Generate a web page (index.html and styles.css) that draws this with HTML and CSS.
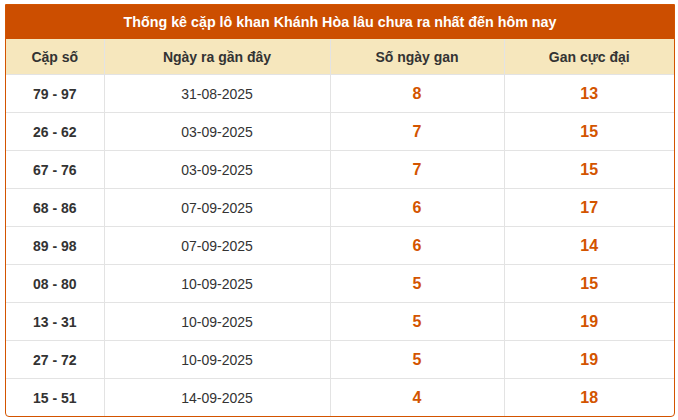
FILE: index.html
```html
<!DOCTYPE html>
<html lang="vi">
<head>
<meta charset="utf-8">
<link rel="stylesheet" href="styles.css">
</head>
<body>
<div class="box">
  <div class="title">Thống kê cặp lô khan Khánh Hòa lâu chưa ra nhất đến hôm nay</div>
  <table class="gan">
    <colgroup>
      <col class="c1"><col class="c2"><col class="c3"><col class="c4">
    </colgroup>
    <thead>
      <tr><th>Cặp số</th><th>Ngày ra gần đây</th><th>Số ngày gan</th><th>Gan cực đại</th></tr>
    </thead>
    <tbody>
      <tr><td class="pair">79 - 97</td><td>31-08-2025</td><td class="num">8</td><td class="num">13</td></tr>
      <tr><td class="pair">26 - 62</td><td>03-09-2025</td><td class="num">7</td><td class="num">15</td></tr>
      <tr><td class="pair">67 - 76</td><td>03-09-2025</td><td class="num">7</td><td class="num">15</td></tr>
      <tr><td class="pair">68 - 86</td><td>07-09-2025</td><td class="num">6</td><td class="num">17</td></tr>
      <tr><td class="pair">89 - 98</td><td>07-09-2025</td><td class="num">6</td><td class="num">14</td></tr>
      <tr><td class="pair">08 - 80</td><td>10-09-2025</td><td class="num">5</td><td class="num">15</td></tr>
      <tr><td class="pair">13 - 31</td><td>10-09-2025</td><td class="num">5</td><td class="num">19</td></tr>
      <tr><td class="pair">27 - 72</td><td>10-09-2025</td><td class="num">5</td><td class="num">19</td></tr>
      <tr><td class="pair">15 - 51</td><td>14-09-2025</td><td class="num">4</td><td class="num">18</td></tr>
    </tbody>
  </table>
</div>
</body>
</html>
```

FILE: styles.css
```css
html, body {
  margin: 0;
  padding: 0;
  background: #ffffff;
}
body {
  padding: 4px 3px 0 5px;
  font-family: "Liberation Sans", Arial, sans-serif;
  color: #333;
}
.box {
  width: 670px;
  box-sizing: border-box;
  border: 1px solid #d35400;
  border-radius: 0 0 4px 4px;
  overflow: hidden;
}
.title {
  background: #cc4e00;
  color: #fff;
  font-weight: bold;
  font-size: 14.3px;
  height: 34px;
  line-height: 35px;
  text-align: center;
  margin-top: -1px;
  padding-top: 1px;
}
.gan {
  width: 100%;
  border-collapse: collapse;
  table-layout: fixed;
}
.c1 { width: 98px; }
.c2 { width: 226px; }
.c3 { width: 174px; }
.c4 { width: auto; }
.gan th {
  background: #f6e7bd;
  font-size: 14px;
  font-weight: bold;
  color: #333;
  height: 35px;
  padding: 0;
  border-right: 1px solid #e3e3e3;
  border-bottom: 1px solid #e3e3e3;
}
.gan td {
  height: 37px;
  padding: 0;
  text-align: center;
  font-size: 14px;
  color: #333;
  border-right: 1px solid #e3e3e3;
  border-bottom: 1px solid #e3e3e3;
}
.gan th:last-child, .gan td:last-child { border-right: none; }
.gan tbody tr:last-child td { border-bottom: none; }
.gan td.pair { font-weight: bold; }
.gan td.num {
  font-weight: bold;
  font-size: 16px;
  color: #d35400;
}
```
